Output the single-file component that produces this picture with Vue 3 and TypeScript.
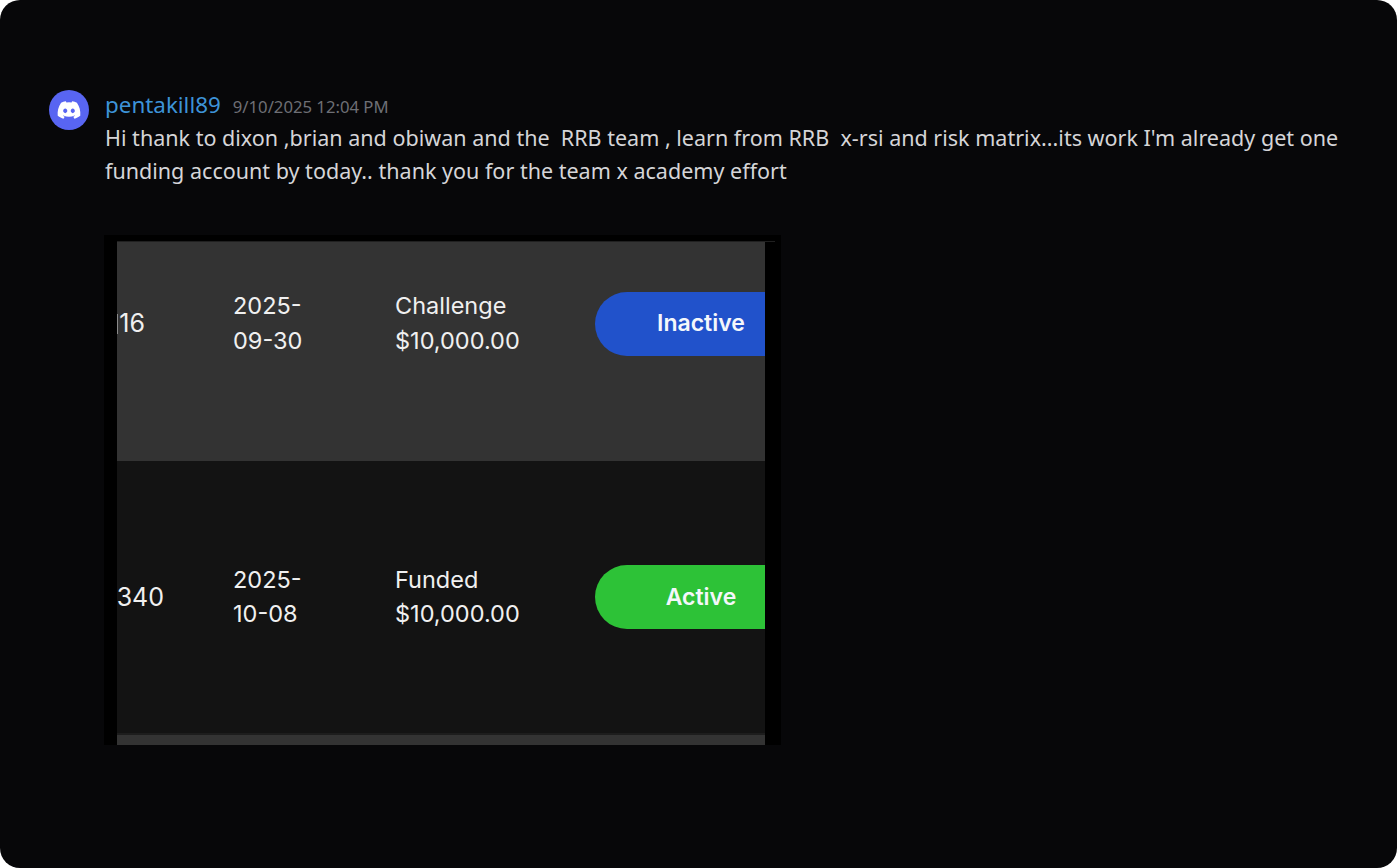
<script setup lang="ts">
interface Row { id: string; date: string[]; kind: string; amount: string; status: string; tone: string }
const rows: Row[] = [
  { id: '16', date: ['2025-', '09-30'], kind: 'Challenge', amount: '$10,000.00', status: 'Inactive', tone: 'light' },
  { id: '340', date: ['2025-', '10-08'], kind: 'Funded', amount: '$10,000.00', status: 'Active', tone: 'dark' },
]
const message = "Hi thank to dixon ,brian and obiwan and the  RRB team , learn from RRB  x-rsi and risk matrix...its work I'm already get one funding account by today.. thank you for the team x academy effort"
</script>

<template>
  <main class="page">
    <article class="message">
      <div class="avatar">
        <svg viewBox="0 0 24 24" width="26" height="26" aria-hidden="true">
          <path fill="#fff" d="M19.27 5.33C17.94 4.71 16.5 4.26 15 4a.09.09 0 0 0-.07.03c-.18.33-.39.76-.53 1.09a16.09 16.09 0 0 0-4.8 0c-.14-.34-.35-.76-.54-1.09-.01-.02-.04-.03-.07-.03-1.5.26-2.93.71-4.27 1.33-.01 0-.02.01-.03.02-2.72 4.07-3.47 8.03-3.1 11.95 0 .02.01.04.03.05 1.8 1.32 3.53 2.12 5.24 2.65.03.01.06 0 .07-.02.4-.55.76-1.13 1.07-1.74.02-.04 0-.08-.04-.09-.57-.22-1.11-.48-1.64-.78-.04-.02-.04-.08-.01-.11.11-.08.22-.17.33-.25.02-.02.05-.02.07-.01 3.44 1.57 7.15 1.57 10.55 0 .02-.01.05-.01.07.01.11.09.22.17.33.26.04.03.04.09-.01.11-.52.31-1.07.56-1.64.78-.04.01-.05.06-.04.09.32.61.68 1.19 1.07 1.74.03.01.06.02.09.01 1.72-.53 3.45-1.33 5.25-2.65.02-.01.03-.03.03-.05.44-4.53-.73-8.46-3.1-11.95-.01-.01-.02-.02-.04-.02zM8.52 14.91c-1.03 0-1.89-.95-1.89-2.12s.84-2.12 1.89-2.12c1.06 0 1.9.96 1.89 2.12 0 1.17-.84 2.12-1.89 2.12zm6.97 0c-1.03 0-1.89-.95-1.89-2.12s.84-2.12 1.89-2.12c1.06 0 1.9.96 1.89 2.12 0 1.17-.83 2.12-1.89 2.12z" />
        </svg>
      </div>
      <div class="body">
        <header class="meta">
          <span class="name">pentakill89</span>
          <time class="stamp">9/10/2025 12:04 PM</time>
        </header>
        <p class="text">{{ message }}</p>
        <figure class="shot">
          <div class="table">
            <div class="top-gap"></div>
            <div v-for="r in rows" :key="r.id" class="row" :class="r.tone">
              <div class="id"><span>{{ r.id }}</span></div>
              <div class="date"><span v-for="d in r.date" :key="d">{{ d }}</span></div>
              <div class="kind"><span>{{ r.kind }}</span><span>{{ r.amount }}</span></div>
              <div class="pill" :class="r.status.toLowerCase()">{{ r.status }}</div>
            </div>
            <div class="tail"></div>
          </div>
        </figure>
      </div>
    </article>
  </main>
</template>

<style>
html, body { margin: 0; background: #ffffff; }
</style>

<style scoped>
.page {
  width: 1397px;
  height: 868px;
  box-sizing: border-box;
  overflow: hidden;
  background: #070709;
  border-radius: 20px;
  padding: 90px 0 0 49px;
  font-family: "Noto Sans", "Liberation Sans", sans-serif;
}
.message { display: flex; gap: 16px; }
.avatar {
  width: 40px;
  height: 40px;
  flex: none;
  border-radius: 50%;
  background: #5865f2;
  display: flex;
  align-items: center;
  justify-content: center;
}
.body { width: 1240px; }
.meta { display: flex; align-items: baseline; gap: 12px; height: 32px; line-height: 32px; margin-top: -1px; }
.name { font-size: 22.4px; color: #3d93d8; }
.stamp { font-size: 16.7px; color: #6e6f75; }
.text {
  margin: 0;
  font-size: 21.54px;
  line-height: 33px;
  color: #d5d5d8;
  white-space: pre-wrap;
}
.shot {
  margin: 48px 0 0 -1px;
  width: 677px;
  height: 510px;
  background: #000;
  box-sizing: border-box;
  padding: 0 16px 0 13px;
  overflow: hidden;
}
.table { display: flex; flex-direction: column; height: 100%; }
.top-gap { height: 7px; flex: none; box-sizing: border-box; margin-right: -10px; border-bottom: 1px solid #202020; }
.row {
  display: grid;
  grid-template-columns: 116px 162px 200px 170px;
  align-items: center;
  color: #f0f0f0;
  font-family: Inter, "Liberation Sans", sans-serif;
  font-size: 23.5px;
  line-height: 34.5px;
  overflow: hidden;
  box-sizing: border-box;
}
.row.light { background: #333333; height: 219px; padding-bottom: 56px; }
.row.dark { background: #131313; height: 274px; border-bottom: 2px solid #1d1d1d; }
.tail { flex: 1; background: #333333; }
.id { overflow: hidden; display: flex; justify-content: flex-end; font-size: 25px; }
.light .id { padding-right: 88px; }
.dark .id { padding-right: 69px; }
.light .id span { display: flex; align-items: center; gap: 1px; }
.light .id span::before { content: ""; width: 2px; height: 20px; background: #8a8a8a; }
.date, .kind { display: flex; flex-direction: column; }
.pill {
  height: 64px;
  border-radius: 32px 0 0 32px;
  display: flex;
  align-items: center;
  justify-content: center;
  padding-left: 42px;
  box-sizing: border-box;
  color: #f4f7fb;
  font-weight: 600;
  font-size: 23px;
}
.pill.inactive { background: #2152cb; }
.pill.active { background: #2dc237; }
</style>
